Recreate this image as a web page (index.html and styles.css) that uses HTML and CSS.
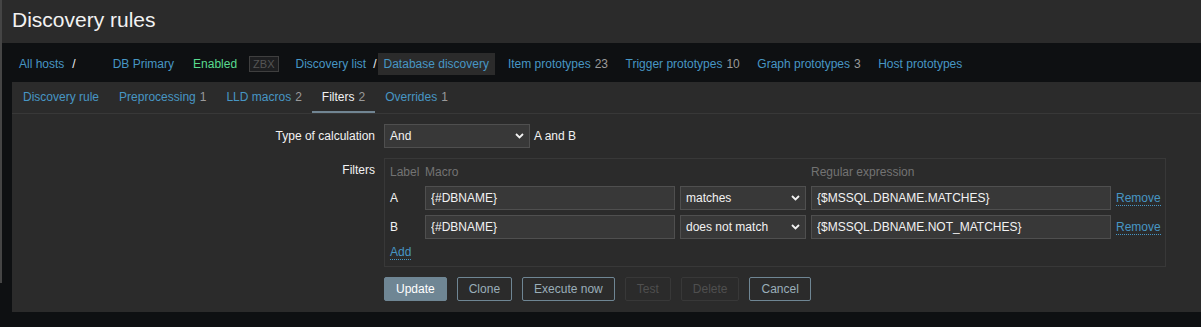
FILE: index.html
```html
<!DOCTYPE html>
<html lang="en">
<head>
  <meta charset="UTF-8">
  <meta name="viewport" content="width=device-width, initial-scale=1.0">
  <title>Discovery rules</title>
  <link rel="stylesheet" href="styles.css">
</head>
<body>
  <div class="layout">
    <div class="side-edge"></div>

    <div class="wrapper">
      <header class="header-title">
        <h1>Discovery rules</h1>
      </header>

      <nav class="host-nav">
        <ul class="breadcrumbs first">
          <li><a href="#">All hosts</a></li>
          <li class="sep">/</li>
        </ul>
        <ul class="host-status">
          <li><a href="#">DB Primary</a></li>
          <li class="status-green">Enabled</li>
          <li><span class="status-box">ZBX</span></li>
        </ul>
        <ul class="breadcrumbs">
          <li><a href="#">Discovery list</a></li>
          <li class="sep">/</li>
          <li class="selected"><a href="#">Database discovery</a></li>
        </ul>
        <ul class="object-links">
          <li><a href="#">Item prototypes</a><span class="count">23</span></li>
          <li><a href="#">Trigger prototypes</a><span class="count">10</span></li>
          <li><a href="#">Graph prototypes</a><span class="count">3</span></li>
          <li><a href="#">Host prototypes</a></li>
        </ul>
      </nav>

      <div class="tabs-container">
        <ul class="tabs">
          <li><a href="#">Discovery rule</a></li>
          <li><a href="#">Preprocessing</a><span class="count">1</span></li>
          <li><a href="#">LLD macros</a><span class="count">2</span></li>
          <li class="active"><a href="#">Filters</a><span class="count">2</span></li>
          <li><a href="#">Overrides</a><span class="count">1</span></li>
        </ul>

        <form class="form-grid">
          <label class="form-label">Type of calculation</label>
          <div class="form-field">
            <button type="button" class="z-select calc-select">
              <span>And</span>
              <svg width="9" height="6" viewBox="0 0 9 6"><polyline points="1,1 4.5,4.5 8,1" fill="none" stroke="#f2f2f2" stroke-width="1.8"/></svg>
            </button>
            <span class="calc-formula">A and B</span>
          </div>

          <label class="form-label">Filters</label>
          <div class="form-field">
            <div class="filter-table">
              <div class="col-head">Label</div>
              <div class="col-head">Macro</div>
              <div></div>
              <div class="col-head">Regular expression</div>
              <div></div>

              <div class="row-label">A</div>
              <input type="text" class="text-input" value="{#DBNAME}">
              <button type="button" class="z-select">
                <span>matches</span>
                <svg width="9" height="6" viewBox="0 0 9 6"><polyline points="1,1 4.5,4.5 8,1" fill="none" stroke="#f2f2f2" stroke-width="1.8"/></svg>
              </button>
              <input type="text" class="text-input" value="{$MSSQL.DBNAME.MATCHES}">
              <a href="#" class="link-action">Remove</a>

              <div class="row-label">B</div>
              <input type="text" class="text-input" value="{#DBNAME}">
              <button type="button" class="z-select">
                <span>does not match</span>
                <svg width="9" height="6" viewBox="0 0 9 6"><polyline points="1,1 4.5,4.5 8,1" fill="none" stroke="#f2f2f2" stroke-width="1.8"/></svg>
              </button>
              <input type="text" class="text-input" value="{$MSSQL.DBNAME.NOT_MATCHES}">
              <a href="#" class="link-action">Remove</a>

              <div class="add-row"><a href="#" class="link-action">Add</a></div>
            </div>
          </div>

          <div></div>
          <div class="form-buttons">
            <button type="button" class="btn btn-main">Update</button>
            <button type="button" class="btn">Clone</button>
            <button type="button" class="btn">Execute now</button>
            <button type="button" class="btn" disabled>Test</button>
            <button type="button" class="btn" disabled>Delete</button>
            <button type="button" class="btn">Cancel</button>
          </div>
        </form>
      </div>
    </div>
  </div>
</body>
</html>
```

FILE: styles.css
```css
/* Global Styles */
* {
  margin: 0;
  padding: 0;
  box-sizing: border-box;
}

body {
  background-color: #0e1012;
  color: #f2f2f2;
  font-family: 'Liberation Sans', Arial, sans-serif;
  font-size: 12px;
}

a {
  color: #4796c4;
  text-decoration: none;
}

ul {
  list-style: none;
}

.layout {
  display: flex;
  align-items: flex-start;
}

.side-edge {
  width: 2px;
  height: 283px;
  background-color: #454545;
}

.wrapper {
  flex: 1;
}

/* Header */
.header-title {
  height: 43px;
  padding: 8px 10px 0;
  background-color: #2b2b2b;
}

.header-title h1 {
  font-size: 21px;
  font-weight: normal;
  line-height: 24px;
  color: #f2f2f2;
}

/* Host navigation */
.host-nav {
  height: 39px;
  padding: 3px 0 0 17px;
  display: flex;
  align-items: center;
}

.host-nav ul {
  display: flex;
  align-items: center;
}

.breadcrumbs .sep {
  color: #f2f2f2;
  margin-left: 7px;
}

.breadcrumbs.first .sep {
  margin-left: 8px;
}

.breadcrumbs .selected {
  margin-left: 1px;
  padding: 0 6px;
  line-height: 22px;
  background-color: #2b2b2b;
}

.host-status {
  margin-left: 37px;
  gap: 19px;
}

.status-green {
  color: #59db8f;
}

.status-box {
  display: inline-block;
  margin-left: -7px;
  padding: 0 3px;
  line-height: 14px;
  font-size: 11px;
  color: #555;
  background-color: #1d1e20;
  border: 1px solid #3f3f3f;
}

.host-status + .breadcrumbs {
  margin-left: 17px;
}

.object-links {
  margin-left: 13px;
  gap: 17.5px;
}

.count {
  margin-left: 4px;
  color: #9a9a9a;
}

/* Tabs */
.tabs-container {
  margin-left: 10px;
  background-color: #2b2b2b;
}

.tabs {
  display: flex;
  padding-left: 1px;
  border-bottom: 1px solid #383838;
}

.tabs li {
  height: 31px;
  line-height: 31px;
  padding: 0 10px;
}

.tabs li.active {
  box-shadow: inset 0 -2px 0 #718593;
}

.tabs li.active a {
  color: #f2f2f2;
}

/* Form */
.form-grid {
  display: grid;
  grid-template-columns: 363px 1fr;
  column-gap: 9px;
  row-gap: 10px;
  padding: 10px 0 11px;
}

.form-label {
  text-align: right;
  line-height: 24px;
  color: #f2f2f2;
}

.form-field {
  display: flex;
  align-items: center;
}

.calc-select {
  width: 146px;
}

.calc-formula {
  margin-left: 4px;
}

.z-select {
  height: 24px;
  padding: 0 5px;
  display: flex;
  align-items: center;
  justify-content: space-between;
  background-color: #383838;
  border: 1px solid #4f4f4f;
  color: #f2f2f2;
  font-family: inherit;
  font-size: 12px;
  text-align: left;
}

.text-input {
  width: 100%;
  height: 24px;
  padding: 0 5px;
  background-color: #383838;
  border: 1px solid #4f4f4f;
  color: #f2f2f2;
  font-family: inherit;
  font-size: 12px;
}

.filter-table {
  display: grid;
  grid-template-columns: 30px 250px 126px 300px auto;
  column-gap: 5px;
  row-gap: 5px;
  align-items: center;
  width: 782px;
  padding: 5px 5px 6px;
  border: 1px solid #383838;
}

.col-head {
  line-height: 17px;
  color: #737373;
  white-space: nowrap;
}

.link-action {
  border-bottom: 1px dotted #4796c4;
  justify-self: start;
}

.add-row {
  grid-column: 1 / -1;
  line-height: 16px;
}

/* Buttons */
.form-buttons {
  display: flex;
  gap: 10px;
}

.btn {
  height: 24px;
  padding: 0 11px;
  border: 1px solid #6f8694;
  border-radius: 2px;
  background: transparent;
  color: #9aaeb9;
  font-family: inherit;
  font-size: 12px;
}

.btn-main {
  background-color: #6f8694;
  color: #fff;
}

.btn:disabled {
  border-color: #383838;
  color: #4f4f4f;
}
```
